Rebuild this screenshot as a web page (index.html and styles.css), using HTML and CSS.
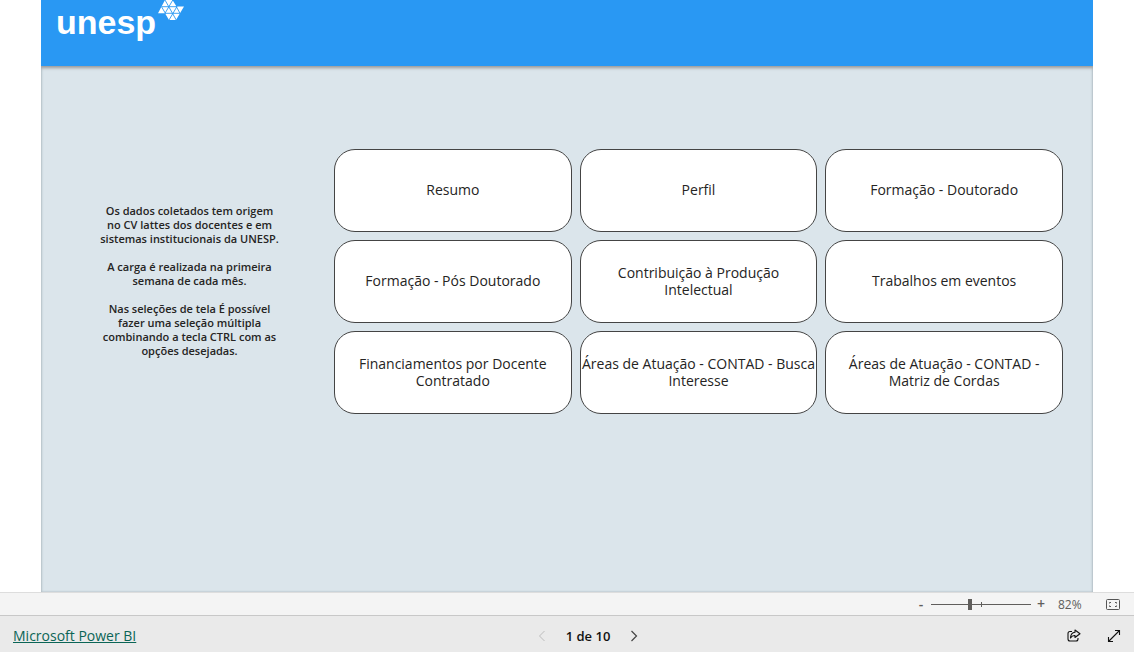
FILE: index.html
```html
<!DOCTYPE html>
<html lang="pt-BR">
<head>
<meta charset="utf-8">
<title>Unesp - Microsoft Power BI</title>
<link rel="stylesheet" href="styles.css">
</head>
<body>
<main class="report">
  <header class="banner">
    <span class="logo-text">unesp</span>
    <svg class="logo-mark" width="28" height="21" viewBox="0 0 28 21" aria-hidden="true">
      <path fill="#fff" d="M8 0H15.500L19.500 6.500H27L19 20H12L8 13.300H1Z"/>
      <path fill="none" stroke="#2998f3" stroke-width="0.900" d="M4.500 6.700H20M8 13.300H23M8 13.300L15.800 0M12 20L20 6.500M8 0L19.500 20.500M4.500 6.700L8.500 13.500M19 6L23 13.300"/>
    </svg>
  </header>
  <div class="content">
    <section class="notes">
      <p>Os dados coletados tem origem<br>no CV lattes dos docentes e em<br>sistemas institucionais da UNESP.</p>
      <p>A carga é realizada na primeira<br>semana de cada mês.</p>
      <p>Nas seleções de tela É possível<br>fazer uma seleção múltipla<br>combinando a tecla CTRL com as<br>opções desejadas.</p>
    </section>
    <nav class="cards">
      <button class="card" type="button">Resumo</button>
      <button class="card" type="button">Perfil</button>
      <button class="card" type="button">Formação - Doutorado</button>
      <button class="card" type="button">Formação - Pós Doutorado</button>
      <button class="card" type="button">Contribuição à Produção<br>Intelectual</button>
      <button class="card" type="button">Trabalhos em eventos</button>
      <button class="card" type="button">Financiamentos por Docente<br>Contratado</button>
      <button class="card" type="button">Áreas de Atuação - CONTAD - Busca<br>Interesse</button>
      <button class="card" type="button">Áreas de Atuação - CONTAD -<br>Matriz de Cordas</button>
    </nav>
  </div>
</main>
<div class="zoombar">
  <button class="zoom-step" type="button" aria-label="Reduzir">-</button>
  <input class="zoom-range" type="range" min="0" max="100" value="39" aria-label="Zoom">
  <button class="zoom-step" type="button" aria-label="Ampliar">+</button>
  <span class="zoom-value">82%</span>
  <button class="icon-button" type="button" aria-label="Ajustar à página">
    <svg width="14" height="11" viewBox="0 0 14 11" fill="none" stroke="#555"><rect x=".5" y=".5" width="13" height="10" rx="1"/><path d="M5 3.500H3.500V4.500M3.500 6.500V7.500H5M9 3.500H10.500V4.500M10.500 6.500V7.500H9"/></svg>
  </button>
</div>
<footer class="footer">
  <a class="brand" href="#">Microsoft Power BI</a>
  <div class="pager">
    <button class="icon-button" type="button" aria-label="Página anterior" disabled><svg width="8" height="12" viewBox="0 0 8 12" fill="none" stroke="#bdbdbd"><path d="M6.500 1L1.500 6L6.500 11"/></svg></button>
    <span class="page">1 de 10</span>
    <button class="icon-button" type="button" aria-label="Próxima página"><svg width="8" height="12" viewBox="0 0 8 12" fill="none" stroke="#444" stroke-width="1.200"><path d="M1.500 1L6.500 6L1.500 11"/></svg></button>
  </div>
  <div class="actions">
    <button class="icon-button" type="button" aria-label="Compartilhar"><svg width="14" height="13" viewBox="0 0 14 13" fill="none" stroke="#111" stroke-width="1.100" stroke-linejoin="round"><path d="M5 2.500H3Q1 2.500 1 4.500V10Q1 12 3 12H9Q11 12 11 10V9M8 1L13 4.700L8 8.500V6.500Q5.200 6.200 3.500 9Q3.700 3.500 8 3.200Z"/></svg></button>
    <button class="icon-button" type="button" aria-label="Tela inteira"><svg width="14" height="14" viewBox="0 0 14 14" fill="none" stroke="#111" stroke-width="1.100"><path d="M1.500 12.500L12.500 1.500M8 1.500H12.500V6M1.500 8V12.500H6"/></svg></button>
  </div>
</footer>
</body>
</html>
```
FILE: styles.css
```css
* {
  box-sizing: border-box;
}

body {
  display: flex;
  flex-direction: column;
  min-height: 100vh;
  margin: 0;
  background: #fff;
  color: #252423;
  font-family: "Open Sans", "Noto Sans", sans-serif;
}

button {
  padding: 0;
  border: 0;
  background: none;
  color: inherit;
  font: inherit;
}

.report {
  flex: 1;
  margin: 0 41px;
  overflow: hidden;
  background: #dbe5eb;
  box-shadow: inset 1px 0 2px #b4bfc6, inset -1px 0 2px #b4bfc6;
}

.banner {
  display: flex;
  align-items: flex-start;
  height: 66px;
  padding-left: 15px;
  background: #2998f3;
  box-shadow: 0 1px 3px 1px #999;
}

.logo-text {
  color: #fff;
  font: bold 34px/44px "Liberation Sans", Arial, sans-serif;
}

.logo-mark {
  margin-left: 1px;
}

.content {
  display: grid;
  grid-template-columns: 293px 1fr;
  padding: 83px 30px 0 0;
}

.notes {
  padding: 55px 0 0 4px;
  font-size: 11px;
  font-weight: 600;
  line-height: 14px;
  text-align: center;
}

.notes p {
  margin: 0 0 14px;
}

.cards {
  display: grid;
  grid-template-columns: repeat(3, 1fr);
  grid-auto-rows: 83px;
  gap: 8px;
}

.card {
  padding-bottom: 2px;
  border: 1px solid #444;
  border-radius: 21px;
  background: #fff;
  font-size: 14px;
  line-height: 17px;
}

.zoombar {
  display: flex;
  align-items: center;
  justify-content: flex-end;
  height: 23px;
  padding-right: 14px;
  border-top: 1px solid #ddd;
  background: #f4f4f4;
  color: #605e5c;
  font-size: 12px;
}

.zoom-step {
  width: 14px;
  font-size: 14px;
  font-weight: 600;
  line-height: 20px;
}

.zoom-range {
  width: 100px;
  height: 12px;
  margin: 0 3px;
  appearance: none;
  background:
    linear-gradient(#605e5c, #605e5c) 50px center / 1px 5px no-repeat,
    linear-gradient(#605e5c, #605e5c) center / 100% 1px no-repeat;
}

.zoom-range::-webkit-slider-thumb {
  width: 4px;
  height: 11px;
  appearance: none;
  background: #605e5c;
}

.zoom-value {
  width: 58px;
  padding-left: 10px;
}

.icon-button {
  display: flex;
}

.footer {
  display: grid;
  grid-template-columns: 1fr auto 1fr;
  align-items: center;
  height: 37px;
  padding: 3px 13px 0;
  border-top: 1px solid #c8c8c8;
  background: #eaeaea;
  font-size: 14px;
}

.brand {
  justify-self: start;
  color: #0b6556;
}

.pager {
  display: flex;
  align-items: center;
  gap: 20px;
  margin-left: 42px;
}

.page {
  color: #111;
  font-size: 13px;
  font-weight: 600;
}

.actions {
  display: flex;
  align-items: center;
  justify-content: flex-end;
  gap: 26px;
}
```
